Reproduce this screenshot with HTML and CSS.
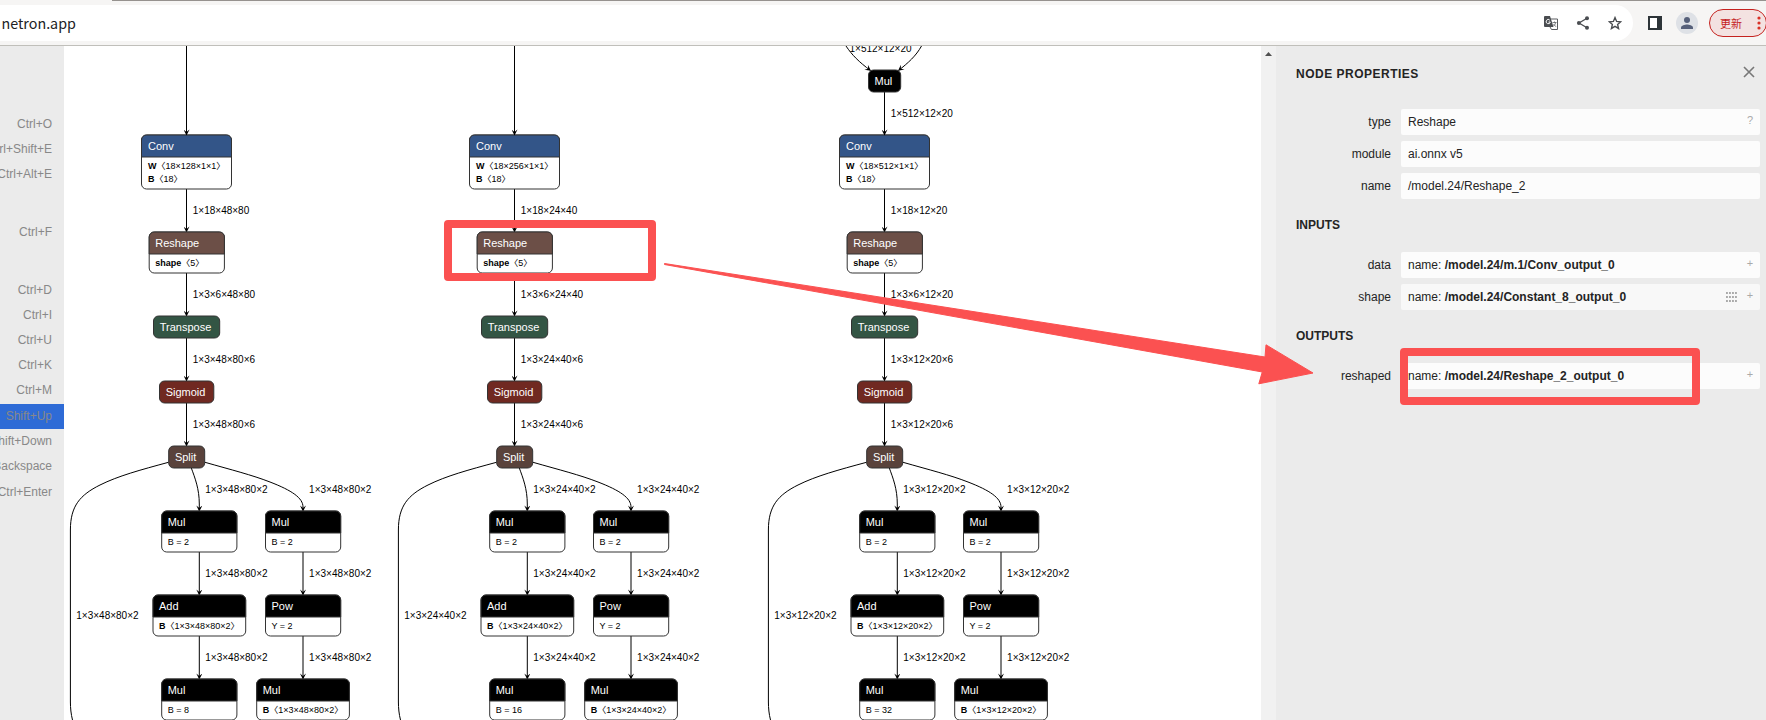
FILE: index.html
```
<!DOCTYPE html>
<html lang="en">
<head>
    <meta charset="UTF-8">
    <meta name="viewport" content="width=device-width, initial-scale=1.0">
    <title>Netron</title>
    <link rel="stylesheet" href="styles.css">
</head>
<body>

    <header class="toolbar">
        <div class="tab-line"></div>
        <div class="address">
            <span class="url">netron.app</span>
            <svg class="icon translate" width="14" height="14" viewBox="0 0 14 14">
                <path d="M6 3h7.5v10.5H7.5L6 11z" fill="#fff" stroke="#5a5d61"/>
                <path d="M1 0h5l3.5 11H1a1 1 0 0 1-1-1V1a1 1 0 0 1 1-1z" fill="#4a4d51"/>
                <path d="M5.8 4.2A2.1 2.1 0 1 0 6.3 6H4.5" fill="none" stroke="#fff"/>
                <path d="M8.5 6.5h4M10.5 5.5v1M11.7 6.5c-.3 1.6-1.2 2.7-2.2 3.5M9.5 8l2.5 2.8" fill="none" stroke="#5a5d61" stroke-width=".8"/>
            </svg>
            <svg class="icon share" width="14" height="14" viewBox="0 0 14 14">
                <path d="M11 2.3L3 7l8 4.7" fill="none" stroke="#4a4d51" stroke-width="1.3"/>
                <circle cx="11" cy="2.3" r="2" fill="#4a4d51"/>
                <circle cx="2.9" cy="7" r="2" fill="#4a4d51"/>
                <circle cx="11" cy="11.7" r="2" fill="#4a4d51"/>
            </svg>
            <svg class="icon" width="14" height="14" viewBox="0 0 14 14">
                <path d="M7 1.6l1.6 3.8 4.1.35-3.1 2.7.95 4L7 10.3l-3.55 2.15.95-4-3.1-2.7 4.1-.35z" fill="none" stroke="#4a4d51" stroke-width="1.4"/>
            </svg>
        </div>
        <svg class="panel-icon" width="14" height="14" viewBox="0 0 14 14">
            <path d="M0 0h14v14H0z" fill="#2d3438"/>
            <path d="M2 2h7v10H2z" fill="#fff"/>
        </svg>
        <svg class="avatar" width="22" height="22" viewBox="0 0 22 22">
            <circle cx="11" cy="11" r="11" fill="#dee1e6"/>
            <circle cx="11" cy="8" r="3" fill="#56607a"/>
            <path d="M5 17v-1.5c0-2 4-3 6-3s6 1 6 3V17z" fill="#56607a"/>
        </svg>
        <div class="update">
            <span>更新</span>
            <svg width="4" height="14" viewBox="0 0 4 14" fill="#d93025">
                <circle cx="2" cy="2" r="1.6"/>
                <circle cx="2" cy="7" r="1.6"/>
                <circle cx="2" cy="12" r="1.6"/>
            </svg>
        </div>
    </header>

    <main class="app">
        <ul class="menu">
            <li>Ctrl+O</li>
            <li>Ctrl+Shift+E</li>
            <li>Ctrl+Alt+E</li>
            <li class="group">Ctrl+F</li>
            <li class="group">Ctrl+D</li>
            <li>Ctrl+I</li>
            <li>Ctrl+U</li>
            <li>Ctrl+K</li>
            <li>Ctrl+M</li>
            <li class="line selected">Shift+Up</li>
            <li>Shift+Down</li>
            <li>Backspace</li>
            <li class="line">Ctrl+Enter</li>
        </ul>

        <svg class="graph" width="1197" height="674" viewBox="64 46 1197 674">
            <defs>
                <marker id="arrow" viewBox="0 0 10 10" refX="9" refY="5" markerWidth="8" markerHeight="6" orient="auto">
                    <path d="M0 0L10 5L0 10L4 5z"/>
                </marker>

                <!-- one detection head, the three branches only differ in shapes -->
                <g id="head">
                    <g class="edge">
                        <path d="M186.5 189V232"/>
                        <path d="M186.5 273V316"/>
                        <path d="M186.5 338V381"/>
                        <path d="M186.5 403V446"/>
                        <path d="M191.3 468C195 478 199.3 489 199.3 504V511"/>
                        <path d="M205 462.3C232 470 252 475 270 482C292 490.5 303 498 303 507V511"/>
                        <path d="M199.3 552V595"/>
                        <path d="M199.3 636V679"/>
                        <path d="M303 552V595"/>
                        <path d="M303 636V679"/>
                    </g>
                    <path class="line" d="M168.5 462.3C140 470 118 476 100 485C80 495 70.4 506 70.4 530V702C70.4 708 71 714 72.5 720"/>

                    <g class="box">
                        <rect x="141.5" y="135" width="90" height="54" rx="5"/>
                        <rect x="149.2" y="232" width="75.2" height="41" rx="5"/>
                        <rect x="161.7" y="511" width="75.2" height="41" rx="5"/>
                        <rect x="265.5" y="511" width="75.2" height="41" rx="5"/>
                        <rect x="153" y="595" width="92.7" height="41" rx="5"/>
                        <rect x="265.5" y="595" width="75.2" height="41" rx="5"/>
                        <rect x="161.7" y="679" width="75.2" height="41" rx="5"/>
                        <rect x="256.7" y="679" width="92.7" height="41" rx="5"/>
                    </g>
                    <g class="title">
                        <path class="layer" d="M141.5 157V140a5 5 0 0 1 5-5h80a5 5 0 0 1 5 5v17z"/>
                        <path class="shape" d="M149.2 254V237a5 5 0 0 1 5-5h65.2a5 5 0 0 1 5 5v17z"/>
                        <rect class="transform" x="153.5" y="316" width="66.2" height="22" rx="5"/>
                        <rect class="activation" x="159.5" y="381" width="54.3" height="22" rx="5"/>
                        <rect class="tensor" x="168.7" y="446" width="36" height="22" rx="5"/>
                        <path d="M161.7 533V516a5 5 0 0 1 5-5h65.2a5 5 0 0 1 5 5v17z"/>
                        <path d="M265.5 533V516a5 5 0 0 1 5-5h65.2a5 5 0 0 1 5 5v17z"/>
                        <path d="M153 617V600a5 5 0 0 1 5-5h82.7a5 5 0 0 1 5 5v17z"/>
                        <path d="M265.5 617V600a5 5 0 0 1 5-5h65.2a5 5 0 0 1 5 5v17z"/>
                        <path d="M161.7 701V684a5 5 0 0 1 5-5h65.2a5 5 0 0 1 5 5v17z"/>
                        <path d="M256.7 701V684a5 5 0 0 1 5-5h82.7a5 5 0 0 1 5 5v17z"/>
                    </g>
                    <g class="name">
                        <text x="148" y="150">Conv</text>
                        <text x="155.2" y="247">Reshape</text>
                        <text x="159.7" y="331">Transpose</text>
                        <text x="165.7" y="396">Sigmoid</text>
                        <text x="174.9" y="461">Split</text>
                        <text x="167.7" y="526">Mul</text>
                        <text x="271.5" y="526">Mul</text>
                        <text x="159" y="610">Add</text>
                        <text x="271.5" y="610">Pow</text>
                        <text x="167.7" y="694">Mul</text>
                        <text x="262.7" y="694">Mul</text>
                    </g>
                    <g class="attr">
                        <text x="155.2" y="266"><tspan class="bold">shape</tspan>〈5〉</text>
                        <text x="167.7" y="545">B = 2</text>
                        <text x="271.5" y="545">B = 2</text>
                        <text x="271.5" y="629">Y = 2</text>
                    </g>
                </g>
            </defs>

            <!-- 48x80 -->
            <g>
                <use href="#head"/>
                <path class="edge" d="M186.5 40V135"/>
                <g class="attr">
                    <text x="148" y="169"><tspan class="bold">W</tspan>〈18×128×1×1〉</text>
                    <text x="148" y="182"><tspan class="bold">B</tspan>〈18〉</text>
                    <text x="159" y="629"><tspan class="bold">B</tspan>〈1×3×48×80×2〉</text>
                    <text x="167.7" y="713">B = 8</text>
                    <text x="262.7" y="713"><tspan class="bold">B</tspan>〈1×3×48×80×2〉</text>
                </g>
                <g class="label">
                    <text x="192.8" y="214">1×18×48×80</text>
                    <text x="192.8" y="298">1×3×6×48×80</text>
                    <text x="192.8" y="363">1×3×48×80×6</text>
                    <text x="192.8" y="428">1×3×48×80×6</text>
                    <text x="205.3" y="493">1×3×48×80×2</text>
                    <text x="309.1" y="493">1×3×48×80×2</text>
                    <text x="205.3" y="577">1×3×48×80×2</text>
                    <text x="309.1" y="577">1×3×48×80×2</text>
                    <text x="76.3" y="619">1×3×48×80×2</text>
                    <text x="205.3" y="661">1×3×48×80×2</text>
                    <text x="309.1" y="661">1×3×48×80×2</text>
                </g>
            </g>

            <!-- 24x40 -->
            <g transform="translate(328 0)">
                <use href="#head"/>
                <path class="edge" d="M186.5 40V135"/>
                <g class="attr">
                    <text x="148" y="169"><tspan class="bold">W</tspan>〈18×256×1×1〉</text>
                    <text x="148" y="182"><tspan class="bold">B</tspan>〈18〉</text>
                    <text x="159" y="629"><tspan class="bold">B</tspan>〈1×3×24×40×2〉</text>
                    <text x="167.7" y="713">B = 16</text>
                    <text x="262.7" y="713"><tspan class="bold">B</tspan>〈1×3×24×40×2〉</text>
                </g>
                <g class="label">
                    <text x="192.8" y="214">1×18×24×40</text>
                    <text x="192.8" y="298">1×3×6×24×40</text>
                    <text x="192.8" y="363">1×3×24×40×6</text>
                    <text x="192.8" y="428">1×3×24×40×6</text>
                    <text x="205.3" y="493">1×3×24×40×2</text>
                    <text x="309.1" y="493">1×3×24×40×2</text>
                    <text x="205.3" y="577">1×3×24×40×2</text>
                    <text x="309.1" y="577">1×3×24×40×2</text>
                    <text x="76.3" y="619">1×3×24×40×2</text>
                    <text x="205.3" y="661">1×3×24×40×2</text>
                    <text x="309.1" y="661">1×3×24×40×2</text>
                </g>
            </g>

            <!-- 12x20 -->
            <g transform="translate(698 0)">
                <use href="#head"/>
                <g class="edge">
                    <path d="M148 46C154 55 161 62 172.5 70.5"/>
                    <path d="M223.5 46C218 56 210 63 200.5 70.5"/>
                    <path d="M186.5 92V135"/>
                </g>
                <g class="title">
                    <rect x="170.5" y="70" width="32.2" height="22" rx="5"/>
                </g>
                <g class="name">
                    <text x="176.6" y="85">Mul</text>
                </g>
                <g class="attr">
                    <text x="148" y="169"><tspan class="bold">W</tspan>〈18×512×1×1〉</text>
                    <text x="148" y="182"><tspan class="bold">B</tspan>〈18〉</text>
                    <text x="159" y="629"><tspan class="bold">B</tspan>〈1×3×12×20×2〉</text>
                    <text x="167.7" y="713">B = 32</text>
                    <text x="262.7" y="713"><tspan class="bold">B</tspan>〈1×3×12×20×2〉</text>
                </g>
                <g class="label">
                    <text x="151.5" y="52">1×512×12×20</text>
                    <text x="192.8" y="117">1×512×12×20</text>
                    <text x="192.8" y="214">1×18×12×20</text>
                    <text x="192.8" y="298">1×3×6×12×20</text>
                    <text x="192.8" y="363">1×3×12×20×6</text>
                    <text x="192.8" y="428">1×3×12×20×6</text>
                    <text x="205.3" y="493">1×3×12×20×2</text>
                    <text x="309.1" y="493">1×3×12×20×2</text>
                    <text x="205.3" y="577">1×3×12×20×2</text>
                    <text x="309.1" y="577">1×3×12×20×2</text>
                    <text x="76.3" y="619">1×3×12×20×2</text>
                    <text x="205.3" y="661">1×3×12×20×2</text>
                    <text x="309.1" y="661">1×3×12×20×2</text>
                </g>
            </g>
        </svg>

        <div class="scrollbar">
            <svg width="7" height="4" viewBox="0 0 7 4"><path d="M0 4L3.5 0L7 4z" fill="#505050"/></svg>
        </div>

        <aside class="sidebar">
            <div class="sidebar-head">
                <h1>NODE PROPERTIES</h1>
                <svg width="12" height="12" viewBox="0 0 12 12"><path d="M1 1l10 10M11 1L1 11" stroke="#777" stroke-width="1.6"/></svg>
            </div>
            <div class="row"><label>type</label><div class="value">Reshape<span class="more">?</span></div></div>
            <div class="row"><label>module</label><div class="value">ai.onnx v5</div></div>
            <div class="row"><label>name</label><div class="value">/model.24/Reshape_2</div></div>

            <h2>INPUTS</h2>
            <div class="row"><label>data</label><div class="value">name:&nbsp;<b>/model.24/m.1/Conv_output_0</b><span class="more">+</span></div></div>
            <div class="row"><label>shape</label><div class="value constant">name:&nbsp;<b>/model.24/Constant_8_output_0</b>
                <svg class="grid" width="11" height="10" viewBox="0 0 11 10"><path d="M0 1H11M0 5H11M0 9H11" stroke="#aaa" stroke-width="2" stroke-dasharray="1.9 1.1"/></svg>
                <span class="more">+</span></div></div>

            <h2>OUTPUTS</h2>
            <div class="row"><label>reshaped</label><div class="value">name:&nbsp;<b>/model.24/Reshape_2_output_0</b><span class="more">+</span></div></div>
        </aside>
    </main>

    <!-- red marks over the graph and the sidebar -->
    <svg class="marks" width="1766" height="720" viewBox="0 0 1766 720">
        <rect x="448" y="224" width="204" height="53"/>
        <rect x="1404" y="352" width="292" height="49"/>
        <path d="M664.5 263.5L1265 357L1266 344.8L1313 373L1258.8 383.8L1262.3 372L664.5 264.5z"/>
    </svg>

</body>
</html>
```
FILE: styles.css
```
* {
    box-sizing: border-box;
}
body {
    margin: 0;
    width: 1766px;
    height: 720px;
    overflow: hidden;
    font-family: "Liberation Sans", Arial, sans-serif;
    font-size: 12px;
    color: #242424;
    background: white;
}
.toolbar {
    position: relative;
    display: flex;
    align-items: center;
    height: 46px;
    background: #f6f5f4;
    border-bottom: 1px solid #c0bfba;
}
.tab-line {
    position: absolute;
    top: 0;
    left: 112px;
    right: 0;
    height: 1px;
    background: #96928f;
}
.address {
    display: flex;
    flex: none;
    align-items: center;
    width: 1633px;
    height: 36px;
    padding-right: 11px;
    background: white;
    border-radius: 0 18px 18px 0;
}
.url {
    flex: 1;
    padding-left: 1.5px;
    font-family: "Noto Sans CJK SC", sans-serif;
    font-size: 14.3px;
    line-height: 34px;
    color: #202124;
}
.icon {
    margin-left: 18px;
}
.panel-icon {
    flex: none;
    margin-left: 15px;
}
.avatar {
    flex: none;
    margin-left: 14px;
}
.update {
    display: flex;
    flex: none;
    align-items: center;
    justify-content: space-between;
    width: 58px;
    height: 28px;
    margin-left: 11px;
    padding: 0 5px 0 10px;
    color: #c5221f;
    background: #f3e2e1;
    border: 1px solid #c5221f;
    border-radius: 14px;
    font-family: "Noto Sans CJK SC", sans-serif;
    font-size: 11px;
}

.app {
    display: flex;
    height: 674px;
}
.menu {
    width: 64px;
    margin: 0;
    padding: 66px 0 0;
    list-style: none;
    overflow: hidden;
    background: #ebebeb;
    color: #888;
}
.menu li {
    display: flex;
    justify-content: flex-end;
    height: 25px;
    padding-right: 12px;
    line-height: 25px;
    white-space: nowrap;
}
.menu .group {
    margin-top: 33px;
}
.menu .line {
    margin-top: 1px;
}
.menu .selected {
    background: #2e6bd6;
}

.graph {
    flex: none;
    background: white;
}
.graph text {
    font-family: "Liberation Sans", "Noto Sans CJK SC", sans-serif;
}
.edge, .line {
    fill: none;
    stroke: #000;
    stroke-width: 1px;
}
path.edge, .edge path {
    marker-end: url(#arrow);
}
.box rect {
    fill: white;
    stroke: #333;
}
.title {
    fill: #000;
    stroke: #333;
}
.layer {
    fill: rgb(51, 85, 136);
}
.shape {
    fill: rgb(108, 79, 71);
}
.transform {
    fill: rgb(51, 85, 68);
}
.activation {
    fill: rgb(112, 41, 33);
}
.tensor {
    fill: rgb(89, 66, 59);
}
.name {
    fill: white;
    font-size: 11px;
}
.attr {
    font-size: 9px;
}
.label {
    font-size: 10px;
}
.bold {
    font-weight: bold;
}

.scrollbar {
    width: 15px;
    padding: 6px 0 0 4px;
    background: #f1f1f1;
}
.scrollbar svg {
    display: block;
}
.sidebar {
    flex: 1;
    padding: 0 6px 0 20px;
    background: #ebebeb;
}
.sidebar-head {
    display: flex;
    justify-content: space-between;
    height: 63px;
    padding: 20px 5px 0 0;
}
h1, h2 {
    margin: 0;
    font-size: 12px;
    line-height: 16px;
}
h1 {
    letter-spacing: 0.5px;
}
h2 {
    padding: 12px 0 19px;
}
.row {
    display: flex;
    align-items: center;
    height: 26px;
    margin-bottom: 6px;
}
.row label {
    width: 95px;
    margin-right: 10px;
    text-align: right;
}
.value {
    display: flex;
    align-items: center;
    width: 359px;
    height: 26px;
    padding: 0 6px 0 7px;
    background: #fcfcfc;
    border-radius: 2px;
}
.constant {
    background: #f8f8f8;
}
.more {
    width: 8px;
    margin-left: auto;
    padding-bottom: 4px;
    color: #aaa;
    font-size: 11px;
    text-align: center;
}
.grid {
    margin-left: auto;
}
.grid + .more {
    margin-left: 9px;
}

.marks {
    position: absolute;
    top: 0;
    left: 0;
    pointer-events: none;
}
.marks rect {
    fill: none;
    stroke: #fb5151;
    stroke-width: 8px;
    stroke-linejoin: round;
}
.marks path {
    fill: #fb5151;
    stroke: #fb5151;
    stroke-width: 1px;
    stroke-linejoin: round;
}
```
